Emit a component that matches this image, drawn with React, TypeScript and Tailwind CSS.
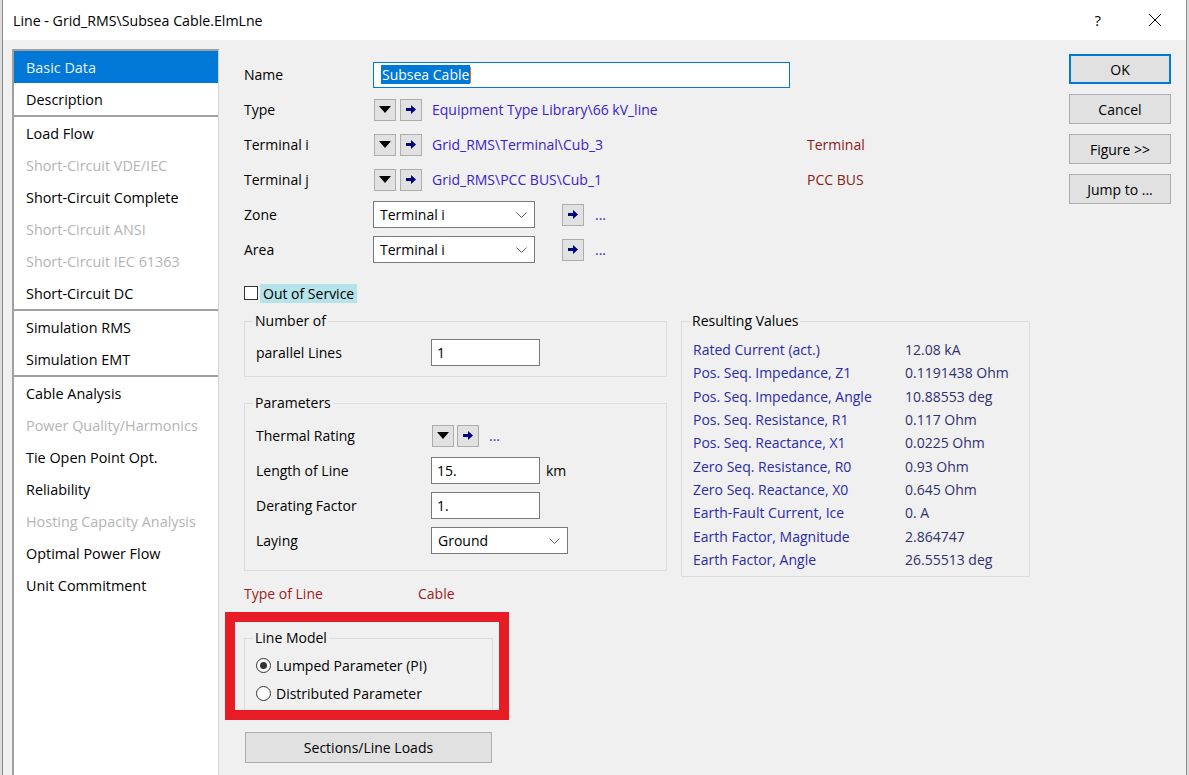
import React from "react";

const navItems: { label: string; off?: boolean; sep?: boolean; active?: boolean }[] = [
  { label: "Basic Data", active: true },
  { label: "Description", sep: true },
  { label: "Load Flow" },
  { label: "Short-Circuit VDE/IEC", off: true },
  { label: "Short-Circuit Complete" },
  { label: "Short-Circuit ANSI", off: true },
  { label: "Short-Circuit IEC 61363", off: true },
  { label: "Short-Circuit DC", sep: true },
  { label: "Simulation RMS" },
  { label: "Simulation EMT", sep: true },
  { label: "Cable Analysis" },
  { label: "Power Quality/Harmonics", off: true },
  { label: "Tie Open Point Opt." },
  { label: "Reliability" },
  { label: "Hosting Capacity Analysis", off: true },
  { label: "Optimal Power Flow" },
  { label: "Unit Commitment" },
];

const results: [string, string][] = [
  ["Rated Current (act.)", "12.08 kA"],
  ["Pos. Seq. Impedance, Z1", "0.1191438 Ohm"],
  ["Pos. Seq. Impedance, Angle", "10.88553 deg"],
  ["Pos. Seq. Resistance, R1", "0.117 Ohm"],
  ["Pos. Seq. Reactance, X1", "0.0225 Ohm"],
  ["Zero Seq. Resistance, R0", "0.93 Ohm"],
  ["Zero Seq. Reactance, X0", "0.645 Ohm"],
  ["Earth-Fault Current, Ice", "0. A"],
  ["Earth Factor, Magnitude", "2.864747"],
  ["Earth Factor, Angle", "26.55513 deg"],
];

function DropBtn() {
  return (
    <div className="w-[22px] h-[22px] bg-[#e1e1e1] border border-[#adadad] flex items-center justify-center">
      <svg width="12" height="7" viewBox="0 0 12 7">
        <path d="M0 0 H12 L6 7 Z" fill="#000" />
      </svg>
    </div>
  );
}

function ArrowBtn() {
  return (
    <div className="w-[22px] h-[22px] bg-[#e1e1e1] border border-[#adadad] flex items-center justify-center">
      <svg width="10" height="9" viewBox="0 0 10 9">
        <path d="M0 3 H5 V0 L10 4.5 L5 9 V6 H0 Z" fill="#000080" />
      </svg>
    </div>
  );
}

function Select({ value, w }: { value: string; w: string }) {
  return (
    <div className={`${w} h-[27px] bg-white border border-[#7a7a7a] flex items-center pl-[6px] pr-[7px]`}>
      <span className="flex-1">{value}</span>
      <svg width="11" height="6" viewBox="0 0 11 6">
        <path d="M0.5 0.5 L5.5 5.5 L10.5 0.5" fill="none" stroke="#606060" strokeWidth="1" />
      </svg>
    </div>
  );
}

function TextBox({ value, w }: { value: string; w: string }) {
  return (
    <div className={`${w} h-[27px] bg-white border border-[#7a7a7a] flex items-center pl-[5px]`}>
      {value}
    </div>
  );
}

function Btn({ label, focus }: { label: string; focus?: boolean }) {
  return (
    <div
      className={
        focus
          ? "h-[30px] bg-[#e1e1e1] border-2 border-[#0078d7] flex items-center justify-center"
          : "h-[30px] bg-[#e1e1e1] border border-[#adadad] flex items-center justify-center"
      }
    >
      {label}
    </div>
  );
}

function Radio({ on }: { on?: boolean }) {
  return (
    <div className="w-[15px] h-[15px] rounded-full bg-white border border-[#333] flex items-center justify-center">
      {on && <div className="w-[7px] h-[7px] rounded-full bg-[#333]" />}
    </div>
  );
}

export default function App() {
  return (
    <div className="w-[1189px] h-[775px] overflow-hidden flex bg-[#f0f0f0] text-[14px] text-black font-['Open_Sans','Noto_Sans',sans-serif] leading-[19px]">
      <div className="w-[3px] bg-[#dcdcdc] border-r border-[#8a8a8a]" />

      <div className="flex-1 flex flex-col">
        {/* title bar */}
        <div className="h-[40px] bg-white flex items-center pl-[10px] shrink-0">
          <span className="text-[14.2px]">Line - Grid_RMS\Subsea Cable.ElmLne</span>
          <span className="ml-auto text-[15px] mr-[47px]">?</span>
          <svg width="14" height="14" viewBox="0 0 14 14" className="mr-[24px]">
            <path d="M1 1 L13 13 M13 1 L1 13" stroke="#000" strokeWidth="1" />
          </svg>
        </div>

        <div className="flex-1 flex pt-[9px] pl-[9px]">
          {/* left nav */}
          <div className="w-[207px] bg-white border-l-2 border-t-2 border-[#a0a0a0] border-r border-r-[#d4d4d4] shrink-0">
            {navItems.map((it) => (
              <div
                key={it.label}
                className={
                  (it.active
                    ? "bg-[#0078d7] text-[#e8f1fa] "
                    : it.off
                    ? "text-[#b4b4b4] "
                    : "text-black ") +
                  "h-[32px] flex items-center pl-[12px] text-[14.4px]" +
                  (it.sep ? " border-b-2 border-[#a0a0a0] box-content" : "")
                }
              >
                {it.label}
              </div>
            ))}
          </div>

          {/* form */}
          <div className="relative w-[816px] pl-[25px] pt-[8px]">
            <div className="flex items-center h-[35px]">
              <span className="w-[129px]">Name</span>
              <div className="w-[417px] h-[26px] bg-white border border-[#0078d7] flex items-center pl-[7px]">
                <span className="bg-[#0078d7] text-white px-px">Subsea Cable</span>
                <span className="w-px h-[16px] bg-[#e0701c]" />
              </div>
            </div>
            <div className="flex items-center h-[35px]">
              <span className="w-[130px]">Type</span>
              <DropBtn />
              <div className="w-[4px]" />
              <ArrowBtn />
              <span className="ml-[10px] text-[#3a22cc]">Equipment Type Library\66 kV_line</span>
            </div>
            <div className="flex items-center h-[35px]">
              <span className="w-[130px]">Terminal i</span>
              <DropBtn />
              <div className="w-[4px]" />
              <ArrowBtn />
              <span className="ml-[10px] w-[375px] text-[#3a22cc]">Grid_RMS\Terminal\Cub_3</span>
              <span className="text-[#8b1a1a]">Terminal</span>
            </div>
            <div className="flex items-center h-[35px]">
              <span className="w-[130px]">Terminal j</span>
              <DropBtn />
              <div className="w-[4px]" />
              <ArrowBtn />
              <span className="ml-[10px] w-[375px] text-[#3a22cc]">Grid_RMS\PCC BUS\Cub_1</span>
              <span className="text-[#8b1a1a]">PCC BUS</span>
            </div>
            {["Zone", "Area"].map((l) => (
              <div key={l} className="flex items-center h-[35px]">
                <span className="w-[129px]">{l}</span>
                <Select value="Terminal i" w="w-[162px]" />
                <div className="ml-[27px]">
                  <ArrowBtn />
                </div>
                <span className="ml-[11px] text-[#3a22cc] leading-[12px]">...</span>
              </div>
            ))}

            <div className="flex items-center h-[20px] mt-[16px]">
              <div className="w-[14px] h-[14px] bg-white border border-[#333]" />
              <span className="ml-[2px] bg-[#b5e3ea] px-[3px] leading-[19px]">Out of Service</span>
            </div>

            <div className="flex items-start mt-[10px]">
              <div className="w-[423px] flex flex-col">
                <fieldset className="border border-[#dcdcdc] pb-[6px]">
                  <legend className="ml-[8px] px-[2px] leading-[16px]">Number of</legend>
                  <div className="flex items-center h-[35px] pl-[11px] mt-[6px]">
                    <span className="w-[175px]">parallel Lines</span>
                    <TextBox value="1" w="w-[109px]" />
                  </div>
                </fieldset>

                <fieldset className="border border-[#dcdcdc] pb-[12px] mt-[18px]">
                  <legend className="ml-[8px] px-[2px] leading-[16px]">Parameters</legend>
                  <div className="pl-[11px] pt-[7px]">
                    <div className="flex items-center h-[35px]">
                      <span className="w-[176px]">Thermal Rating</span>
                      <DropBtn />
                      <div className="w-[3px]" />
                      <ArrowBtn />
                      <span className="ml-[10px] text-[#3a22cc] leading-[12px]">...</span>
                    </div>
                    <div className="flex items-center h-[35px]">
                      <span className="w-[175px]">Length of Line</span>
                      <TextBox value="15." w="w-[109px]" />
                      <span className="ml-[6px]">km</span>
                    </div>
                    <div className="flex items-center h-[35px]">
                      <span className="w-[175px]">Derating Factor</span>
                      <TextBox value="1." w="w-[109px]" />
                    </div>
                    <div className="flex items-center h-[35px]">
                      <span className="w-[175px]">Laying</span>
                      <Select value="Ground" w="w-[137px]" />
                    </div>
                  </div>
                </fieldset>

                <div className="flex items-center h-[20px] mt-[12px] text-[#9b1c1c]">
                  <span className="w-[174px]">Type of Line</span>
                  <span>Cable</span>
                </div>

                <fieldset className="w-[249px] border border-[#dcdcdc] pb-[5px] mt-[27px]">
                  <legend className="ml-[8px] px-[2px] leading-[16px]">Line Model</legend>
                  <div className="pl-[11px] pt-[5px]">
                    <div className="flex items-center h-[28px]">
                      <Radio on />
                      <span className="ml-[5px]">Lumped Parameter (PI)</span>
                    </div>
                    <div className="flex items-center h-[28px]">
                      <Radio />
                      <span className="ml-[5px]">Distributed Parameter</span>
                    </div>
                  </div>
                </fieldset>

                <div className="ml-px mt-[19px] w-[247px] h-[31px] bg-[#e1e1e1] border border-[#adadad] flex items-center justify-center shrink-0">
                  Sections/Line Loads
                </div>
              </div>

              <fieldset className="ml-[14px] w-[349px] border border-[#dcdcdc] pb-[5px]">
                <legend className="ml-[8px] px-[2px] leading-[16px]">Resulting Values</legend>
                <div className="pl-[11px] pt-[9px]">
                  {results.map(([k, v]) => (
                    <div key={k} className="flex items-center h-[23.3px]">
                      <span className="w-[212px] text-[#2b2ba6]">{k}</span>
                      <span className="text-[#30306e]">{v}</span>
                    </div>
                  ))}
                </div>
              </fieldset>
            </div>

            {/* annotation frame */}
            <div className="absolute left-[6px] top-[563px] w-[284px] h-[108px] border-[10px] border-[#e81c24]" />
          </div>

          {/* dialog buttons */}
          <div className="ml-auto w-[102px] mr-[15px] pt-[5px] flex flex-col gap-[10px]">
            <Btn label="OK" focus />
            <Btn label="Cancel" />
            <Btn label="Figure >>" />
            <Btn label="Jump to ..." />
          </div>
        </div>
      </div>

      <div className="w-[3px] bg-[#dcdcdc] border-l border-[#8a8a8a]" />
    </div>
  );
}
